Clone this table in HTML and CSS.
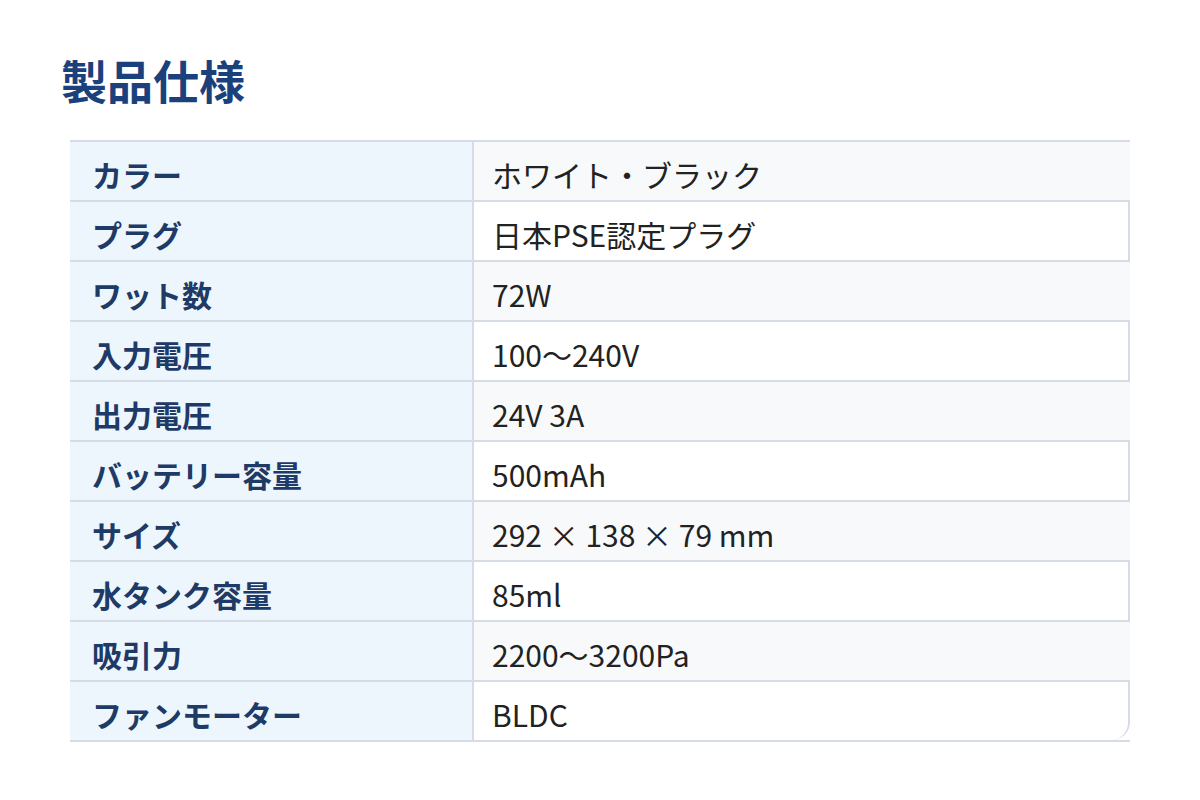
FILE: index.html
```html
<!DOCTYPE html>
<html lang="ja">
<head>
<meta charset="utf-8">
<title>製品仕様</title>
<link rel="stylesheet" href="styles.css">
</head>
<body>
<main class="page">
  <h1 class="title">製品仕様</h1>
  <table class="spec">
    <tbody>
      <tr><th>カラー</th><td>ホワイト・ブラック</td></tr>
      <tr><th>プラグ</th><td>日本PSE認定プラグ</td></tr>
      <tr><th>ワット数</th><td>72W</td></tr>
      <tr><th>入力電圧</th><td>100～240V</td></tr>
      <tr><th>出力電圧</th><td>24V 3A</td></tr>
      <tr><th>バッテリー容量</th><td>500mAh</td></tr>
      <tr><th>サイズ</th><td>292 × 138 × 79 mm</td></tr>
      <tr><th>水タンク容量</th><td>85ml</td></tr>
      <tr><th>吸引力</th><td>2200～3200Pa</td></tr>
      <tr><th>ファンモーター</th><td>BLDC</td></tr>
    </tbody>
  </table>
</main>
</body>
</html>
```
FILE: styles.css
```css
html, body {
  margin: 0;
  padding: 0;
  background: #ffffff;
}
body {
  font-family: "Noto Sans CJK JP", "Noto Sans", sans-serif;
  color: #222222;
}
.page {
  padding: 56px 70px 0 70px;
}
.title {
  margin: 0 0 38px -9px;
  font-size: 46px;
  line-height: 46px;
  font-weight: 700;
  color: #1b417d;
}
.spec {
  width: 1060px;
  border-collapse: separate;
  border-spacing: 0;
  border-top: 2px solid #d5dce6;
  border-bottom: 2px solid #d5dce6;
}
.spec th,
.spec td {
  height: 58px;
  padding: 6px 0 0 0;
  box-sizing: border-box;
  font-size: 30px;
  line-height: 40px;
  text-align: left;
  vertical-align: middle;
}
.spec tr + tr th,
.spec tr + tr td {
  border-top: 2px solid #d5dce6;
  height: 60px;
}
.spec th {
  width: 404px;
  padding-left: 22px;
  background: #eef6fd;
  color: #1e3a66;
  font-weight: 700;
  border-right: 2px solid #d5dce6;
}
.spec td {
  padding-left: 18px;
  font-weight: 400;
  color: #222222;
  background: #f7f9fb;
}
.spec tr:nth-child(even) td {
  background: #ffffff;
  border-right: 2px solid #d5dce6;
}
.spec tr:last-child td {
  border-bottom-right-radius: 18px;
}
```
